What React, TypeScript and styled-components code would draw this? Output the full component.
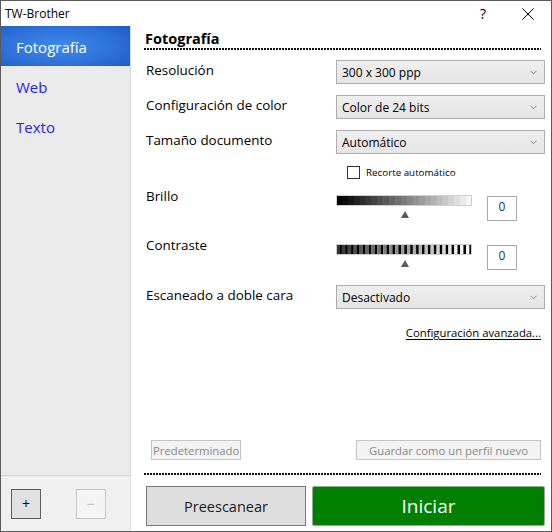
import React from "react";
import styled, { createGlobalStyle } from "styled-components";

const Global = createGlobalStyle`
  html, body { margin: 0; padding: 0; background: #fff; }
  body { font-family: "Open Sans", "Noto Sans", "Liberation Sans", sans-serif; }
  * { box-sizing: border-box; }
`;

const Window = styled.div`
  width: 552px;
  height: 532px;
  border: 1px solid #5b5b5b;
  display: flex;
  flex-direction: column;
  background: #fff;
  color: #000;
`;

const TitleBar = styled.div`
  height: 25px;
  display: flex;
  align-items: center;
  padding-left: 4px;
  font-size: 12px;
`;

const TitleText = styled.span`
  flex: 1;
`;

const HelpGlyph = styled.span`
  width: 14px;
  text-align: center;
  font-size: 14px;
  margin-right: 32px;
`;

const CloseBox = styled.span`
  width: 12px;
  height: 12px;
  margin-right: 17px;
  display: flex;
`;

const Body = styled.div`
  flex: 1;
  display: flex;
  min-height: 0;
`;

const Sidebar = styled.div`
  width: 130px;
  display: flex;
  flex-direction: column;
`;

const NavList = styled.div`
  flex: 1;
  background: #ebebeb;
  border-right: 1px solid #d8d8d8;
  border-bottom: 1px solid #d4d4d4;
`;

const NavItem = styled.div<{ $active?: boolean }>`
  height: 40px;
  display: flex;
  align-items: center;
  padding-left: 15px;
  padding-top: 1px;
  font-size: 15px;
  color: ${(p) => (p.$active ? "#fff" : "#2424ec")};
  background: ${(p) =>
    p.$active
      ? "radial-gradient(ellipse 75% 80% at 45% 50%, #3f89ea 0%, #2e72da 55%, #1c5ac2 100%)"
      : "transparent"};
`;

const SidebarFooter = styled.div`
  height: 55px;
  background: #f0f0f0;
  border-right: 1px solid #e2e2e2;
  display: flex;
  align-items: flex-start;
  padding: 13px 0 0 10px;
  gap: 35px;
`;

const SquareButton = styled.button<{ $disabled?: boolean }>`
  width: 30px;
  height: 30px;
  padding: 0;
  font-family: inherit;
  font-size: 14px;
  line-height: 1;
  border: 1px solid ${(p) => (p.$disabled ? "#c8c8c8" : "#5e5e5e")};
  background: ${(p) => (p.$disabled ? "#f4f4f4" : "#e1e1e1")};
  color: ${(p) => (p.$disabled ? "#c0c0c0" : "#000")};
  display: flex;
  align-items: center;
  justify-content: center;
`;

const Main = styled.div`
  flex: 1;
  display: flex;
  flex-direction: column;
  padding: 0 6px 5px 13px;
`;

const Heading = styled.div`
  padding-top: 4px;
  height: 22px;
  font-size: 14.5px;
  font-weight: 700;
  line-height: 18px;
  padding-left: 1px;
`;

const Dotted = styled.div`
  height: 2px;
  margin-right: 4px;
  background: repeating-linear-gradient(to right, #111 0 2px, transparent 2px 3px);
`;

const Form = styled.div`
  flex: 1;
  display: flex;
  flex-direction: column;
  padding-left: 2px;
  padding-top: 10px;
`;

const Row = styled.div<{ $mt?: number }>`
  display: flex;
  align-items: center;
  height: 24px;
  margin-top: ${(p) => p.$mt ?? 0}px;
`;

const Label = styled.div<{ $raise?: boolean }>`
  width: 190px;
  font-size: 13.4px;
  line-height: 20px;
  flex-shrink: 0;
  padding-bottom: ${(p) => (p.$raise ? "4px" : "0")};
`;

const Select = styled.div`
  width: 209px;
  height: 24px;
  border: 1px solid #adadad;
  background: linear-gradient(#efefef, #e5e5e5);
  display: flex;
  align-items: center;
  padding: 1px 7px 0 5px;
  font-size: 12px;
`;

const SelectText = styled.span`
  flex: 1;
`;

const CheckRow = styled.div`
  display: flex;
  align-items: center;
  height: 14px;
  margin-top: 11px;
  padding-left: 201px;
  gap: 6px;
  font-size: 9.8px;
`;

const CheckBox = styled.span`
  width: 13px;
  height: 13px;
  border: 1px solid #333;
  background: #fff;
`;

const SliderRow = styled.div<{ $mt: number }>`
  display: flex;
  height: 36px;
  margin-top: ${(p) => p.$mt}px;
`;

const SliderCol = styled.div`
  width: 136px;
  padding-top: 9px;
  display: flex;
  flex-direction: column;
  align-items: center;
`;

const Thumb = styled.div`
  margin-top: 5px;
  margin-left: 1px;
  width: 0;
  height: 0;
  border-left: 4px solid transparent;
  border-right: 4px solid transparent;
  border-bottom: 7px solid #5a5a5a;
`;

const ValueBox = styled.div`
  width: 30px;
  height: 25px;
  margin-top: 10px;
  margin-left: 15px;
  border: 1px solid #a9a9a9;
  text-align: center;
  font-size: 12px;
  padding-top: 1px;
  color: #1d2f66;
`;

const LinkRow = styled.div`
  margin-top: 16px;
  display: flex;
  justify-content: flex-end;
  padding-right: 4px;
  font-size: 11.3px;
`;

const Link = styled.span`
  text-decoration: underline;
  text-underline-offset: 2px;
`;

const Spacer = styled.div`
  flex: 1;
`;

const SmallButtons = styled.div`
  display: flex;
  justify-content: space-between;
  padding: 0 4px 0 5px;
  margin-bottom: 13px;
`;

const SmallButton = styled.div`
  height: 20px;
  border: 1px solid #c4c4c4;
  background: #f3f3f3;
  color: #8a8a8a;
  font-size: 11.3px;
  padding: 0 12px;
  display: flex;
  align-items: center;
`;

const SmallButtonTight = styled(SmallButton)`
  padding: 0 1px;
`;

const BigButtons = styled.div`
  display: flex;
  gap: 6px;
  margin-top: 11px;
  padding-left: 2px;
`;

const BigButton = styled.div<{ $primary?: boolean }>`
  height: 40px;
  display: flex;
  align-items: center;
  justify-content: center;
  width: ${(p) => (p.$primary ? "233px" : "160px")};
  border: 1px solid ${(p) => (p.$primary ? "#9aa79a" : "#7a7a7a")};
  border-radius: ${(p) => (p.$primary ? "2px" : "0")};
  background: ${(p) => (p.$primary ? "#008000" : "#dedede")};
  color: ${(p) => (p.$primary ? "#fff" : "#1a1a1a")};
  font-size: ${(p) => (p.$primary ? "19px" : "14.5px")};
`;

const Chevron = () => (
  <svg width="7" height="5" viewBox="0 0 7 5">
    <polyline points="0.5,0.8 3.5,3.8 6.5,0.8" fill="none" stroke="#8a8a8a" strokeWidth="1" />
  </svg>
);

const BrightnessBar = () => {
  const n = 23;
  const w = 136 / n;
  return (
    <svg width="136" height="11" viewBox="0 0 136 11">
      {Array.from({ length: n }).map((_, i) => {
        const v = Math.round((i / (n - 1)) * 245);
        return <rect key={i} x={i * w} y={0} width={w + 0.5} height={11} fill={`rgb(${v},${v},${v})`} />;
      })}
      <rect x="0.5" y="0.5" width="135" height="10" fill="none" stroke="#cfcfcf" strokeWidth="1" />
    </svg>
  );
};

const ContrastBar = () => {
  const n = 23;
  const w = 136 / n;
  return (
    <svg width="136" height="11" viewBox="0 0 136 11">
      <rect x="0" y="0" width="136" height="11" fill="#fff" />
      {Array.from({ length: n }).map((_, i) => {
        const v = Math.round(50 + (i / (n - 1)) * 205);
        return (
          <g key={i}>
            <rect x={i * w} y={0} width={w * 0.55} height={11} fill={`rgb(${v},${v},${v})`} />
            <rect x={i * w + w * 0.55} y={0} width={w * 0.45} height={11} fill="#000" />
          </g>
        );
      })}
      <rect x="0.5" y="0.5" width="135" height="10" fill="none" stroke="#cfcfcf" strokeWidth="1" />
    </svg>
  );
};

const SelectBox = ({ value }: { value: string }) => (
  <Select>
    <SelectText>{value}</SelectText>
    <Chevron />
  </Select>
);

export default function App() {
  return (
    <>
      <Global />
      <Window>
        <TitleBar>
          <TitleText>TW-Brother</TitleText>
          <HelpGlyph>?</HelpGlyph>
          <CloseBox>
            <svg width="12" height="12" viewBox="0 0 12 12">
              <path d="M0.5 0.5 L11.5 11.5 M11.5 0.5 L0.5 11.5" stroke="#000" strokeWidth="1" />
            </svg>
          </CloseBox>
        </TitleBar>
        <Body>
          <Sidebar>
            <NavList>
              <NavItem $active>Fotografía</NavItem>
              <NavItem>Web</NavItem>
              <NavItem>Texto</NavItem>
            </NavList>
            <SidebarFooter>
              <SquareButton>+</SquareButton>
              <SquareButton $disabled>−</SquareButton>
            </SidebarFooter>
          </Sidebar>
          <Main>
            <Heading>Fotografía</Heading>
            <Dotted />
            <Form>
              <Row>
                <Label $raise>Resolución</Label>
                <SelectBox value="300 x 300 ppp" />
              </Row>
              <Row $mt={11}>
                <Label $raise>Configuración de color</Label>
                <SelectBox value="Color de 24 bits" />
              </Row>
              <Row $mt={11}>
                <Label $raise>Tamaño documento</Label>
                <SelectBox value="Automático" />
              </Row>
              <CheckRow>
                <CheckBox />
                <span>Recorte automático</span>
              </CheckRow>
              <SliderRow $mt={7}>
                <Label>Brillo</Label>
                <SliderCol>
                  <BrightnessBar />
                  <Thumb />
                </SliderCol>
                <ValueBox>0</ValueBox>
              </SliderRow>
              <SliderRow $mt={13}>
                <Label>Contraste</Label>
                <SliderCol>
                  <ContrastBar />
                  <Thumb />
                </SliderCol>
                <ValueBox>0</ValueBox>
              </SliderRow>
              <Row $mt={14}>
                <Label $raise>Escaneado a doble cara</Label>
                <SelectBox value="Desactivado" />
              </Row>
              <LinkRow>
                <Link>Configuración avanzada...</Link>
              </LinkRow>
              <Spacer />
              <SmallButtons>
                <SmallButtonTight>Predeterminado</SmallButtonTight>
                <SmallButton>Guardar como un perfil nuevo</SmallButton>
              </SmallButtons>
            </Form>
            <Dotted />
            <BigButtons>
              <BigButton>Preescanear</BigButton>
              <BigButton $primary>Iniciar</BigButton>
            </BigButtons>
          </Main>
        </Body>
      </Window>
    </>
  );
}
